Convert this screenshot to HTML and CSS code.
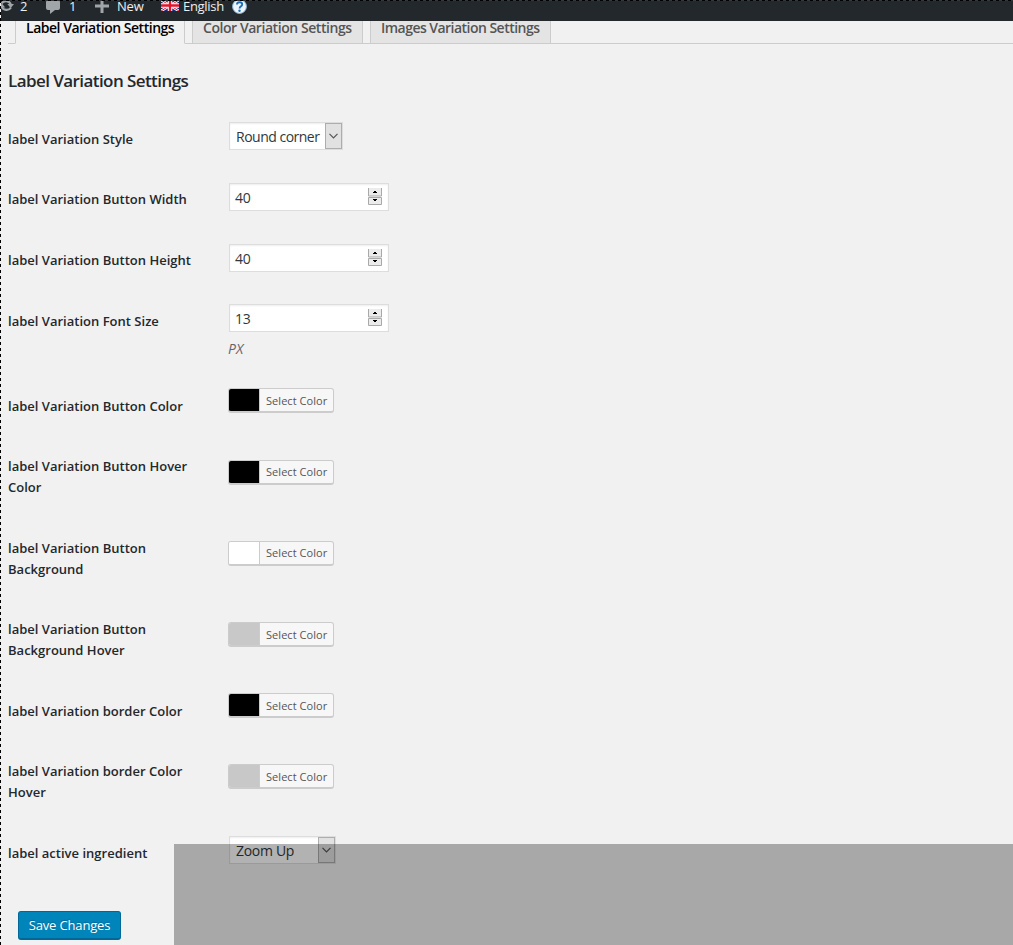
FILE: index.html
```html
<!DOCTYPE html>
<html lang="en">
<head>
<meta charset="utf-8">
<title>Label Variation Settings</title>
<link rel="stylesheet" href="styles.css">
</head>
<body>
<svg class="defs" width="0" height="0">
  <symbol id="chevron" viewBox="0 0 9 6"><path d="M.5.8 4.5 4.800 8.500.8" fill="none" stroke="#555" stroke-width="1.200"/></symbol>
  <symbol id="spin" viewBox="0 0 14 18">
    <path d="M0 0h14v8H0z" fill="#ececec"/><path d="M.5 0v8h13V0" fill="none" stroke="#a9a9a9"/>
    <path d="M.5 9.500h13v7H.5z" fill="#ececec" stroke="#a9a9a9"/>
    <path d="M6 3h2v1h1v1H5V4h1zM5 11h4v1H8v1H6v-1H5z" fill="#000"/>
  </symbol>
</svg>
<header class="bar">
  <svg class="i-update" width="15" height="14" viewBox="0 0 15 14"><g fill="none" stroke="#a0a5aa" stroke-width="2.200"><path d="M2.500 4.500a5.200 5.200 0 0 1 9.300 1"/><path d="M12 8.500a5.200 5.200 0 0 1-9.300-1"/></g><path d="M8.300 5h6.700l-3.300 4zM-.5 8.500h6.700L3 4.500z" fill="#a0a5aa"/></svg>
  <span class="t-two">2</span>
  <svg class="i-comment" width="14" height="15" viewBox="0 0 14 15"><path d="M2 0h10q2 0 2 2v6q0 2-2 2H9l-5 4v-4H2Q0 10 0 8V2Q0 0 2 0z" fill="#a0a5aa"/></svg>
  <span class="t-one">1</span>
  <svg class="i-plus" width="14" height="14" viewBox="0 0 14 14"><path d="M5.500 0h3v5.500H14v3H8.500V14h-3V8.500H0v-3h5.500z" fill="#a0a5aa"/></svg>
  <span class="t-new">New</span>
  <svg class="i-flag" width="18" height="11" viewBox="0 0 18 11"><path d="M0 0h18v11H0z" fill="#1b2a7d"/><path d="M0 0l18 11M18 0L0 11" stroke="#fff" stroke-width="2.600"/><path d="M0 0l18 11M18 0L0 11" stroke="#e0142c" stroke-width="1"/><path d="M9 0v11M0 5.500h18" stroke="#fff" stroke-width="4.500"/><path d="M9 0v11M0 5.500h18" stroke="#e0142c" stroke-width="2.400"/></svg>
  <span class="t-lang">English</span>
  <svg class="i-help" width="15" height="15" viewBox="0 0 15 15"><circle cx="7.500" cy="7.500" r="6.900" fill="#edf4fa" stroke="#8db8dc"/><path d="M5 5.500q0-2.300 2.600-2.300T10.200 5.400q0 1.200-1.300 1.900T7.600 9.400" fill="none" stroke="#1d6fb8" stroke-width="1.900"/><circle cx="7.500" cy="11.700" r="1.200" fill="#1d6fb8"/></svg>
</header>
<nav class="tabs">
  <a class="tab active"><span>Label Variation Settings</span></a>
  <a class="tab color"><span>Color Variation Settings</span></a>
  <a class="tab images"><span>Images Variation Settings</span></a>
</nav>
<main class="content">
  <h2>Label Variation Settings</h2>
  <form class="form">
    <div class="row"><label>label Variation Style</label><div class="select round"><span>Round corner</span><i><svg width="9" height="6"><use href="#chevron"/></svg></i></div></div>
    <div class="row r61 low"><label>label Variation Button Width</label><div class="number"><span>40</span><svg width="14" height="18"><use href="#spin"/></svg></div></div>
    <div class="row r61 low"><label>label Variation Button Height</label><div class="number"><span>40</span><svg width="14" height="18"><use href="#spin"/></svg></div></div>
    <div class="row r85"><label>label Variation Font Size</label><div><div class="number"><span>13</span><svg width="14" height="18"><use href="#spin"/></svg></div><em>PX</em></div></div>
    <div class="row high"><label>label Variation Button Color</label><div class="picker"><b class="black"></b><span>Select Color</span></div></div>
    <div class="row r82 deep plus"><label>label Variation Button Hover<br>Color</label><div class="picker tight"><b class="black"></b><span>Select Color</span></div></div>
    <div class="row r81 deep"><label>label Variation Button<br>Background</label><div class="picker tight"><b class="white"></b><span>Select Color</span></div></div>
    <div class="row r82 deep"><label>label Variation Button<br>Background Hover</label><div class="picker"><b class="gray"></b><span>Select Color</span></div></div>
    <div class="row high"><label>label Variation border Color</label><div class="picker"><b class="black"></b><span>Select Color</span></div></div>
    <div class="row r82 deep"><label>label Variation border Color<br>Hover</label><div class="picker"><b class="gray"></b><span>Select Color</span></div></div>
    <div class="row"><label>label active ingredient</label><div class="select zoom"><span>Zoom Up</span><i><svg width="9" height="6"><use href="#chevron"/></svg></i></div></div>
    <button class="save" type="button">Save Changes</button>
  </form>
</main>
<div class="shade"></div>
<div class="edge-left"></div>
<div class="edge-top"></div>
</body>
</html>
```
FILE: styles.css
```css
* { box-sizing: border-box; }
body { margin: 0; width: 1013px; height: 945px; overflow: hidden; position: relative; background: #f1f1f1; color: #23282d; font-family: "Open Sans", "Noto Sans", sans-serif; font-size: 13px; }
svg { display: block; flex: none; }
.defs { position: absolute; }
span { white-space: nowrap; }
.bar { height: 21px; background: #23282d; color: #eee; display: flex; align-items: flex-start; line-height: 13px; }
.i-update { margin: -1px 0 0 -1px; }
.t-two { width: 25px; padding-left: 6px; }
.i-comment { margin-left: 7px; }
.t-one { margin-left: 9px; width: 17px; }
.i-plus { margin: -1px 0 0 9px; }
.t-new { margin-left: 8px; width: 28px; letter-spacing: -.2px; }
.i-flag { margin-left: 16px; }
.t-lang { margin-left: 4px; width: 41px; letter-spacing: -.3px; }
.i-help { margin-left: 8px; margin-top: -1px; }
.tabs { height: 23px; margin-left: 8px; padding-left: 7px; display: flex; gap: 7px; border-bottom: 1px solid #ccc; }
.tab { height: 23px; border: 1px solid #ccc; border-top: 0; background: #e4e4e4; color: #555; font-size: 14px; font-weight: 600; line-height: 13px; padding-left: 10px; letter-spacing: -.48px; }
.tab.active { width: 170px; background: #f1f1f1; border-bottom-color: #f1f1f1; color: #000; }
.tab.color { width: 171px; letter-spacing: -.44px; }
.tab.images { width: 181px; letter-spacing: -.53px; }
.content { padding-left: 8px; }
h2 { margin: 0; height: 64px; padding-top: 25px; font-size: 17px; line-height: 24px; font-weight: 600; letter-spacing: -.57px; }
.row { display: grid; grid-template-columns: 220px 1fr; align-items: start; height: 60px; padding-top: 14px; }
.row > label { padding-top: 7px; line-height: 21px; font-weight: 600; letter-spacing: .01px; }
.low { padding-top: 15px; }
.low > label { padding-top: 6px; }
.high { padding-top: 13px; }
.high > label { padding-top: 8px; }
.deep { padding-top: 24px; }
.deep > label { margin-top: -3px; padding-top: 0; }
.plus { padding-top: 25px; }
.plus > label { margin-top: -4px; }
.r61 { height: 61px; }
.r81 { height: 81px; }
.r82 { height: 82px; }
.r85 { height: 85px; }
.select, .number { height: 28px; margin-left: 1px; border: 1px solid #ddd; background: #fff; box-shadow: inset 0 1px 2px rgba(0,0,0,.07); display: flex; color: #32373c; font-size: 14px; line-height: 28px; }
.select { justify-content: space-between; padding-left: 6px; letter-spacing: -.2px; }
.round { width: 114px; letter-spacing: -.5px; }
.zoom { width: 107px; letter-spacing: -.3px; }
.select i { width: 17px; height: 26px; border: 1px solid #adadad; background: #e1e1e1; display: flex; justify-content: center; padding-top: 9px; }
.number { width: 160px; padding: 0 5px; justify-content: space-between; letter-spacing: -.2px; }
.number svg { margin-top: 4px; margin-right: 1px; }
em { display: block; padding-top: 7px; line-height: 20px; font-size: 14px; color: #666; }
.picker { width: 106px; height: 25px; display: flex; border: 1px solid #ccc; border-bottom-width: 2px; border-radius: 3px; background: #f7f7f7; overflow: hidden; color: #555; font-size: 11px; line-height: 24px; letter-spacing: .05px; }
.picker.tight { line-height: 22px; }
.picker b { width: 31px; border-right: 1px solid #ccc; margin-right: 6px; flex: none; }
.black { background: #000; }
.white { background: #fff; }
.gray { background: #c8c8c8; }
.save { display: block; width: 103px; height: 29px; margin: 29px 0 0 10px; padding: 0; border: 1px solid #006799; border-bottom-width: 2px; border-radius: 3px; background: #0085ba; color: #fff; font: 13px/26px "Open Sans", sans-serif; letter-spacing: -.15px; text-shadow: 0 -1px 1px #006799; }
.shade { position: absolute; left: 174px; top: 844px; right: 0; bottom: 0; background: rgba(0,0,0,.3); }
.edge-left { position: absolute; left: 0; top: 0; width: 1px; height: 945px; background: repeating-linear-gradient(#000 0 3px, #eee 3px 6px); }
.edge-top { position: absolute; left: 0; top: 0; width: 1013px; height: 1px; background: repeating-linear-gradient(90deg, #000 0 3px, #33383d 3px 6px); }
```
